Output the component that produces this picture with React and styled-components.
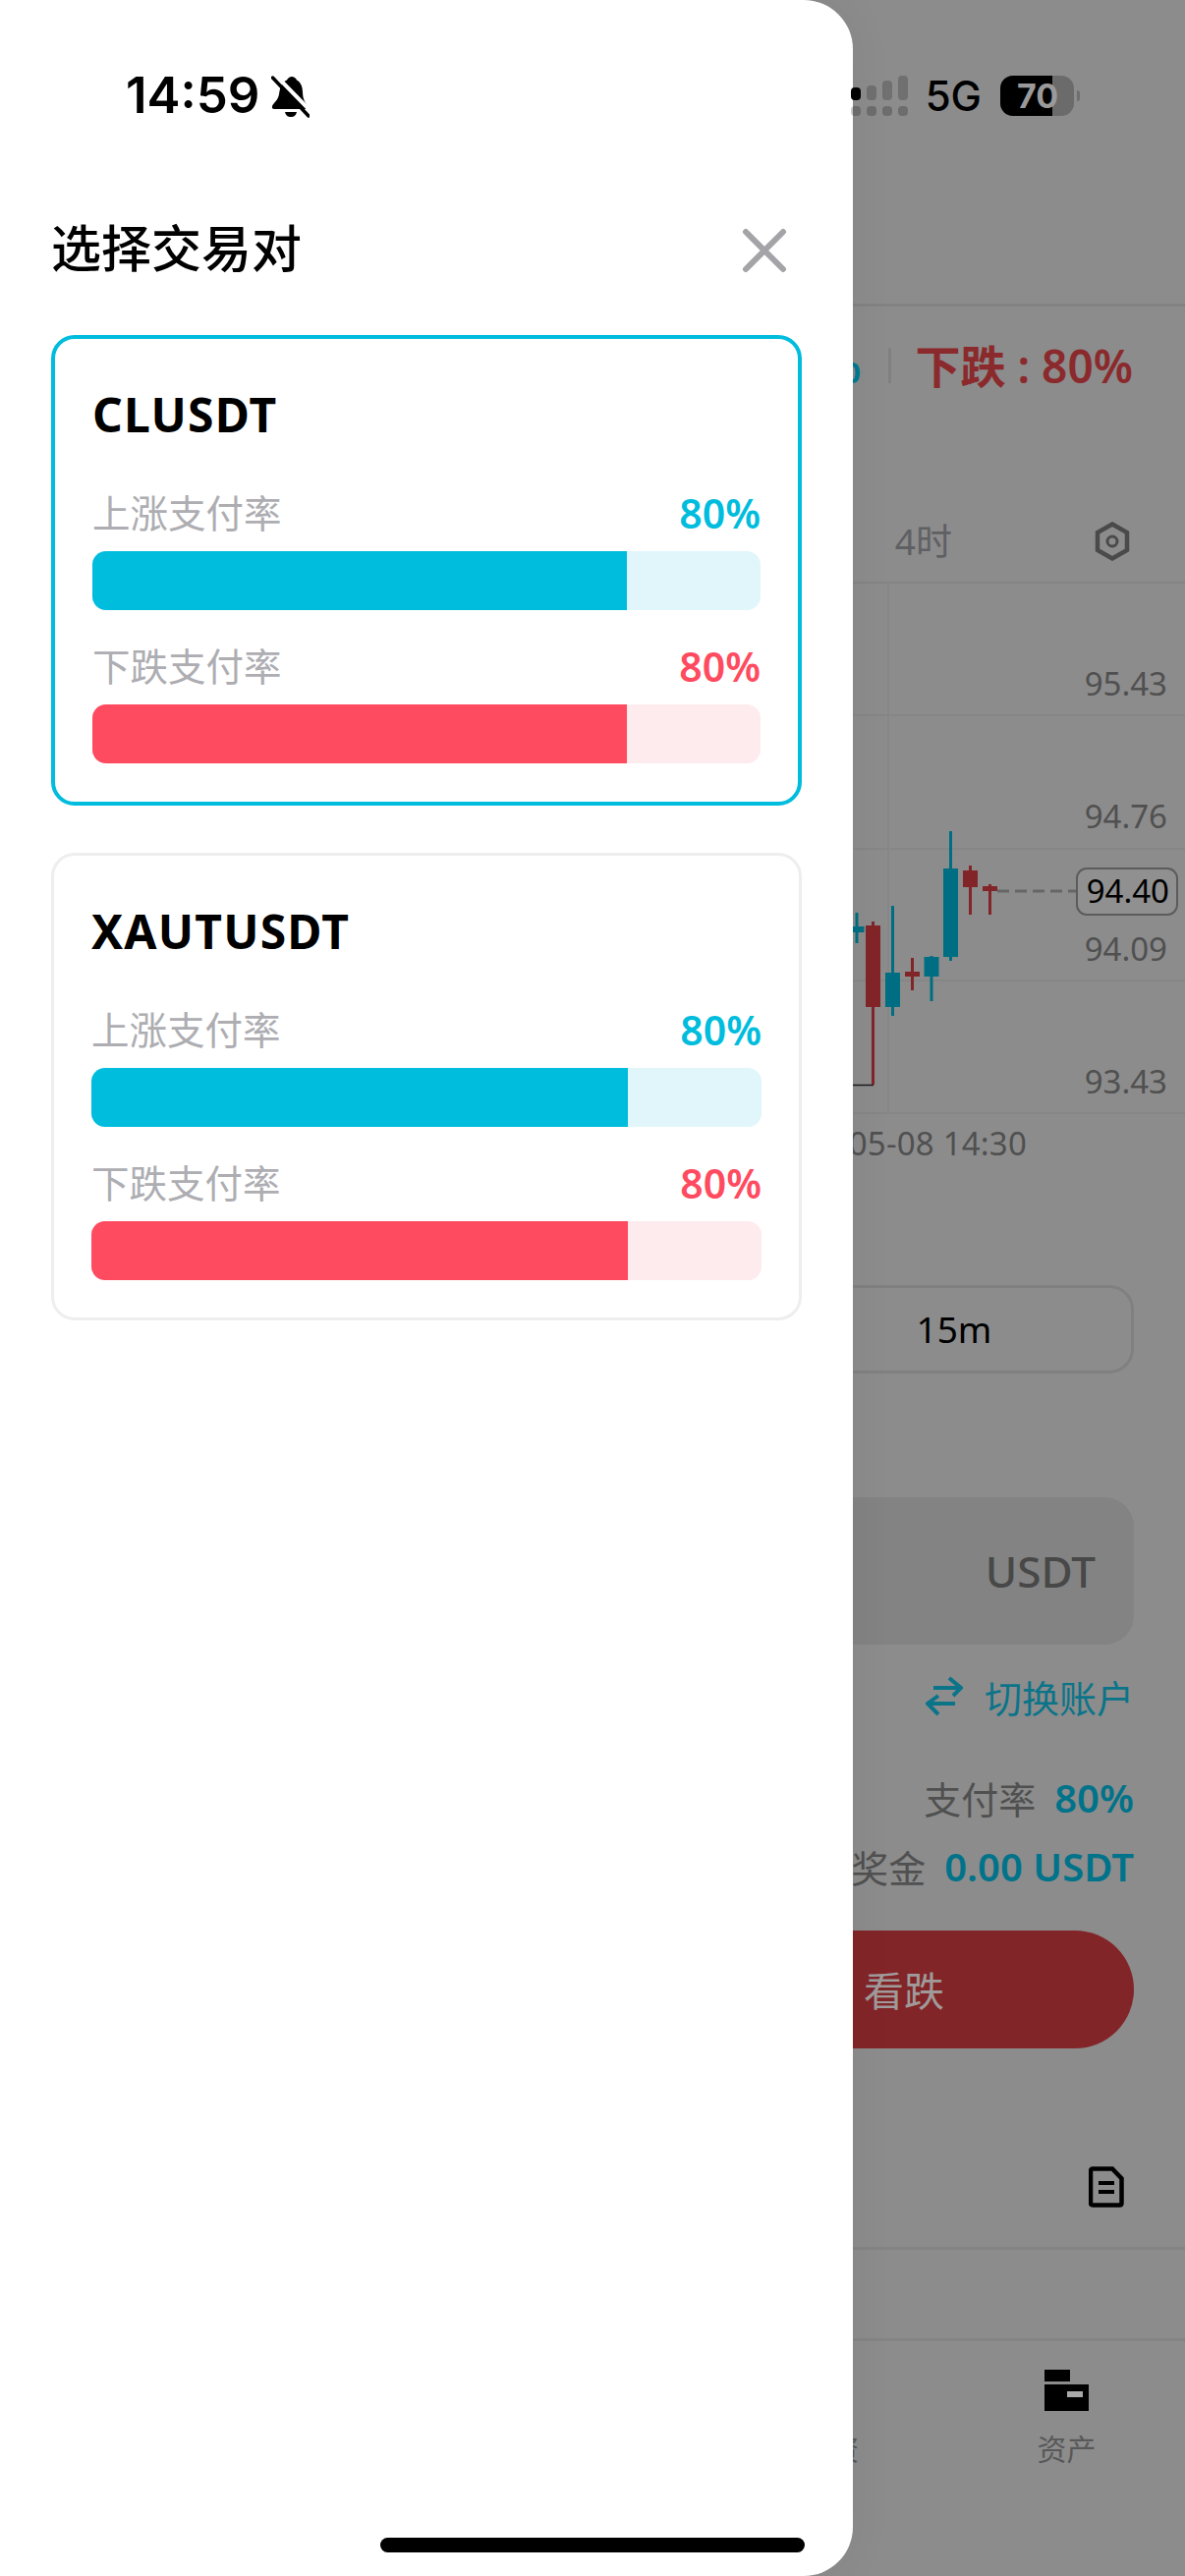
import styled, { createGlobalStyle } from "styled-components";

const GlobalStyle = createGlobalStyle`
  html, body {
    margin: 0;
    padding: 0;
    background: #8c8c8c;
  }
  * {
    box-sizing: border-box;
  }
`;

const latin = `"Noto Sans", "Noto Sans CJK SC", sans-serif`;
const cjk = `"Noto Sans CJK SC", "Noto Sans", sans-serif`;

const pairs = [
  { id: 1, name: "CLUSDT", up: 80, down: 80, selected: true },
  { id: 2, name: "XAUTUSDT", up: 80, down: 80, selected: false },
];

const candles = [
  { x: 872, top: 929, bottom: 960, open: 943, close: 949, up: true },
  { x: 888.5, top: 938, bottom: 1104, open: 942, close: 1025, up: false },
  { x: 908.5, top: 922, bottom: 1034, open: 990, close: 1025, up: true },
  { x: 928.5, top: 975, bottom: 1008, open: 989, close: 994, up: false },
  { x: 948, top: 973, bottom: 1019, open: 974, close: 994, up: true },
  { x: 967.5, top: 846, bottom: 978, open: 884, close: 974, up: true },
  { x: 987.5, top: 881, bottom: 931, open: 886, close: 903, up: false },
  { x: 1007.5, top: 900, bottom: 931, open: 902, close: 907, up: false },
];

const axisPrices = [
  { label: "95.43", y: 708 },
  { label: "94.76", y: 843 },
  { label: "94.09", y: 978 },
  { label: "93.43", y: 1113 },
];

function BellOffIcon() {
  return (
    <svg width="39" height="43" viewBox="0 0 39 43">
      <path
        d="M21 1c-2 0-4 1.5-5 3.5C10 7 9 13 8 19 7 25 3 27 1 31c-.5 2 .5 3 2 3h32c2 0 3-1 2-3-3-4-5-8-5-14 0-7-3-11-6-12.500C25 2.500 23 1 21 1Z"
        fill="#000"
      />
      <path d="M14 37h12c-1 4-3 5-6 5s-5-1-6-5Z" fill="#000" />
      <path d="M4 -1 44 40" stroke="#fff" strokeWidth="4" />
      <path d="M1.500 2 38 41" stroke="#000" strokeWidth="3.500" strokeLinecap="round" />
    </svg>
  );
}

function CloseIcon() {
  return (
    <svg width="46" height="46" viewBox="0 0 46 46">
      <path d="M4 4 42 42M42 4 4 42" stroke="#a3a3a8" strokeWidth="6" strokeLinecap="round" />
    </svg>
  );
}

function HexIcon() {
  return (
    <svg width="36" height="40" viewBox="0 0 36 40">
      <polygon
        points="18,2.500 33,11 33,29 18,37.500 3,29 3,11"
        fill="none"
        stroke="#4a4a4a"
        strokeWidth="4.500"
      />
      <circle cx="18" cy="20" r="5" fill="none" stroke="#4a4a4a" strokeWidth="3" />
    </svg>
  );
}

function SwapIcon() {
  return (
    <svg width="38" height="42" viewBox="0 0 38 42">
      <g fill="none" stroke="#0b7489" strokeWidth="4">
        <path d="M8 13H35" />
        <path d="M24 3 36 13 28 21" />
        <path d="M30 29H3" />
        <path d="M13 21 2 29 13 40" />
      </g>
    </svg>
  );
}

function DocIcon() {
  return (
    <svg width="36" height="42" viewBox="0 0 36 42">
      <path
        d="M4 2.500H24L33.500 12.500V37.500C33.500 38.800 32.800 39.500 31.500 39.500H4C2.800 39.500 2 38.800 2 37.500V4.500C2 3.200 2.800 2.500 4 2.500Z"
        fill="none"
        stroke="#000"
        strokeWidth="4.500"
      />
      <path d="M10 17H26M10 26H26" stroke="#000" strokeWidth="4" />
    </svg>
  );
}

function WalletIcon() {
  return (
    <svg width="45" height="42" viewBox="0 0 45 42">
      <rect x="0" y="0" width="26" height="12" fill="#000" />
      <rect x="0" y="15" width="45" height="27" fill="#000" />
      <rect x="23" y="22" width="16" height="6" fill="#a9a9a9" />
    </svg>
  );
}

function KlineChart() {
  return (
    <ChartSvg width="1206" height="596" viewBox="0 594 1206 596">
      <g stroke="#868686" strokeWidth="2">
        <path d="M0 728H1206M0 864H1206M0 998H1206M0 1133H1206" />
        <path d="M904 594V1133" />
      </g>
      <path d="M860 1104.500H889" stroke="#1c1c1c" strokeWidth="1.500" />
      {candles.map((c) => (
        <g key={c.x} fill={c.up ? "#006e82" : "#822528"}>
          <rect x={c.x - 1.5} y={c.top} width="3" height={c.bottom - c.top} />
          <rect x={c.x - 7.5} y={c.open} width="15" height={c.close - c.open} />
        </g>
      ))}
      <path d="M1015 907H1095" stroke="#666" strokeWidth="3" strokeDasharray="12 6" />
      {axisPrices.map((p) => (
        <AxisText key={p.label} x="1188" y={p.y} textAnchor="end">
          {p.label}
        </AxisText>
      ))}
      <rect x="1096" y="884" width="102" height="47" rx="10" fill="#909090" stroke="#5c5c5c" strokeWidth="2" />
      <AxisText x="1190" y="919" textAnchor="end" fill="#000">
        94.40
      </AxisText>
      <AxisText x="1045" y="1176" textAnchor="end" letterSpacing="0.2">
        05-08 14:30
      </AxisText>
    </ChartSvg>
  );
}

function RateBar({ label, value, color, track }) {
  return (
    <RateBlock>
      <RateHead>
        <RateLabel>{label}</RateLabel>
        <RateValue $color={color}>{value}%</RateValue>
      </RateHead>
      <BarTrack $track={track}>
        <BarFill $color={color} style={{ width: `${value}%` }} />
      </BarTrack>
    </RateBlock>
  );
}

function PairCard({ name, up, down, selected }) {
  return (
    <Card $selected={selected}>
      <CardTitle>{name}</CardTitle>
      <RateBar label="上涨支付率" value={up} color="#00bcdd" track="#e0f6fb" />
      <RateBar label="下跌支付率" value={down} color="#ff4b5f" track="#feebed" />
    </Card>
  );
}

export default function App() {
  return (
    <>
      <GlobalStyle />
      <Screen>
        <Backdrop>
          <TopBar />
          <RatesRow>
            <UpRate>上涨 : 80%</UpRate>
            <RateDivider />
            <DownRate>下跌 : 80%</DownRate>
          </RatesRow>
          <ChartTabs>
            <ChartTab>4时</ChartTab>
            <HexIcon />
          </ChartTabs>
          <KlineChart />
          <Duration>15m</Duration>
          <AmountField>USDT</AmountField>
          <SwitchAccount>
            <SwapIcon />
            <span>切换账户</span>
          </SwitchAccount>
          <InfoRow>
            <InfoLabel>支付率</InfoLabel>
            <InfoValue>80%</InfoValue>
          </InfoRow>
          <BonusRow>
            <InfoLabel>预计奖金</InfoLabel>
            <InfoValue>0.00 USDT</InfoValue>
          </BonusRow>
          <FallButton>看跌</FallButton>
          <OrdersHead>
            <DocIcon />
          </OrdersHead>
          <EmptyRow />
          <TabBar>
            <TabItem />
            <TabItem />
            <TabItem />
            <TabItem>
              <TabLabel>投资</TabLabel>
            </TabItem>
            <TabItem>
              <WalletIcon />
              <TabLabel>资产</TabLabel>
            </TabItem>
          </TabBar>
        </Backdrop>

        <Drawer>
          <DrawerHead>
            <DrawerTitle>选择交易对</DrawerTitle>
            <CloseSlot>
              <CloseIcon />
            </CloseSlot>
          </DrawerHead>
          <CardList>
            {pairs.map(({ id, ...pair }) => (
              <PairCard key={id} {...pair} />
            ))}
          </CardList>
        </Drawer>

        <StatusBar>
          <TimeGroup>
            <Clock>14:59</Clock>
            <BellOffIcon />
          </TimeGroup>
          <StatusRight>
            <SignalGrid>
              <SignalBar $h={13} $on />
              <SignalBar $h={15} />
              <SignalBar $h={20} />
              <SignalBar $h={25} />
              <SignalDot />
              <SignalDot />
              <SignalDot />
              <SignalDot />
            </SignalGrid>
            <Network>5G</Network>
            <Battery>
              <BatteryCharge style={{ width: "70%" }} />
              <BatteryText>70</BatteryText>
            </Battery>
            <BatteryNub />
          </StatusRight>
        </StatusBar>

        <HomeIndicator />
      </Screen>
    </>
  );
}

const Screen = styled.div`
  position: relative;
  width: 1206px;
  height: 2622px;
  overflow: hidden;
  background: #8c8c8c;
`;

const Backdrop = styled.div`
  display: flex;
  flex-direction: column;
  height: 100%;
  font-family: ${latin};
`;

const TopBar = styled.div`
  height: 312px;
  border-bottom: 3px solid #828282;
`;

const RatesRow = styled.div`
  display: flex;
  justify-content: flex-end;
  align-items: center;
  height: 125px;
  padding: 0 53px 5px 0;
  font-size: 46px;
  line-height: 60px;
  font-weight: 600;
  font-family: ${latin};
`;

const UpRate = styled.div`
  color: #007a92;
`;

const RateDivider = styled.div`
  width: 3px;
  height: 36px;
  margin: 0 25px 0 27px;
  background: #808080;
`;

const DownRate = styled.div`
  color: #8b2a2c;
`;

const ChartTabs = styled.div`
  display: flex;
  justify-content: flex-end;
  align-items: center;
  gap: 145px;
  height: 157px;
  padding: 72px 56px 0 0;
  border-bottom: 2px solid #848484;
`;

const ChartTab = styled.div`
  font-family: ${latin};
  font-size: 37px;
  line-height: 84px;
  color: #5f6063;
`;

const ChartSvg = styled.svg`
  display: block;
  flex: none;
`;

const AxisText = styled.text`
  font-family: ${latin};
  font-size: 33px;
  fill: ${(p) => p.fill || "#505050"};
`;

const Duration = styled.div`
  align-self: flex-end;
  width: 366px;
  height: 90px;
  margin: 118px 52px 0 0;
  border: 3px solid #808080;
  border-radius: 25px;
  text-align: center;
  font-size: 37px;
  line-height: 84px;
  color: #000;
`;

const AmountField = styled.div`
  align-self: flex-end;
  width: 500px;
  height: 150px;
  margin: 126px 52px 0 0;
  padding-right: 39px;
  border-radius: 30px;
  background: #838383;
  text-align: right;
  font-size: 44px;
  font-weight: 500;
  line-height: 150px;
  color: #484848;
`;

const SwitchAccount = styled.div`
  align-self: flex-end;
  display: flex;
  align-items: center;
  gap: 22px;
  height: 50px;
  margin: 27px 52px 0 0;
  font-family: ${cjk};
  font-size: 38px;
  color: #0b7489;
`;

const InfoRow = styled.div`
  align-self: flex-end;
  display: flex;
  align-items: center;
  gap: 19px;
  height: 50px;
  margin: 53px 52px 0 0;
`;

const BonusRow = styled(InfoRow)`
  margin-top: 20px;
`;

const InfoLabel = styled.span`
  font-family: ${cjk};
  font-size: 38px;
  color: #505050;
`;

const InfoValue = styled.span`
  font-family: ${latin};
  font-size: 40px;
  font-weight: 600;
  color: #00738a;
`;

const FallButton = styled.div`
  align-self: flex-end;
  width: 480px;
  height: 120px;
  margin: 41px 52px 0 0;
  padding-left: 205px;
  border-radius: 60px;
  background: #822528;
  font-family: ${cjk};
  font-size: 41px;
  line-height: 118px;
  color: #a09a9a;
`;

const OrdersHead = styled.div`
  display: flex;
  justify-content: flex-end;
  height: 205px;
  padding: 120px 62px 0 0;
  border-bottom: 3px solid #848484;
`;

const EmptyRow = styled.div`
  height: 93px;
  border-bottom: 3px solid #848484;
`;

const TabBar = styled.div`
  display: grid;
  grid-template-columns: repeat(5, 1fr);
  padding-top: 29px;
`;

const TabItem = styled.div`
  display: flex;
  flex-direction: column;
  justify-content: flex-end;
  align-items: center;
  gap: 17px;
  height: 99px;
`;

const TabLabel = styled.div`
  font-family: ${cjk};
  font-size: 30px;
  line-height: 40px;
  color: #585858;
`;

const Drawer = styled.div`
  position: absolute;
  top: 0;
  bottom: 0;
  left: 0;
  width: 868px;
  padding: 228px 52px 0;
  border-radius: 0 50px 50px 0;
  background: #fff;
  box-shadow: 0 0 48px rgba(0, 0, 0, 0.05);
`;

const DrawerHead = styled.div`
  display: flex;
  justify-content: space-between;
  align-items: center;
  height: 50px;
`;

const DrawerTitle = styled.h2`
  margin: 0 0 7px;
  font-family: ${cjk};
  font-size: 51px;
  font-weight: 500;
  line-height: 50px;
  color: #000;
`;

const CloseSlot = styled.div`
  display: flex;
  margin: 3px 15px 0 0;
`;

const CardList = styled.div`
  display: flex;
  flex-direction: column;
  gap: 48px;
  margin-top: 63px;
`;

const Card = styled.div`
  padding: ${(p) => (p.$selected ? "38px 38px 39px" : "38px")};
  border: ${(p) => (p.$selected ? "4px solid #00bcdd" : "3px solid #eeeeee")};
  border-radius: 24px;
  background: #fff;
`;

const CardTitle = styled.div`
  height: 80px;
  margin-bottom: 34px;
  font-family: ${latin};
  font-size: 48px;
  font-weight: 700;
  line-height: 78px;
  letter-spacing: 1.200px;
  color: #000;
`;

const RateBlock = styled.div`
  & + & {
    margin-top: 32px;
  }
`;

const RateHead = styled.div`
  display: flex;
  justify-content: space-between;
  align-items: center;
  height: 52px;
  margin-bottom: 12px;
`;

const RateLabel = styled.span`
  margin-bottom: 6px;
  font-family: ${cjk};
  font-size: 38.500px;
  font-weight: 400;
  color: #adadb2;
`;

const RateValue = styled.span`
  margin-bottom: 3px;
  font-family: ${latin};
  font-size: 41px;
  font-weight: 600;
  color: ${(p) => p.$color};
`;

const BarTrack = styled.div`
  height: 60px;
  overflow: hidden;
  border-radius: 14px;
  background: ${(p) => p.$track};
`;

const BarFill = styled.div`
  height: 100%;
  background: ${(p) => p.$color};
`;

const StatusBar = styled.div`
  position: absolute;
  top: 0;
  left: 0;
  right: 0;
  display: flex;
  justify-content: space-between;
  height: 130px;
  padding: 77px 107px 0 128px;
`;

const TimeGroup = styled.div`
  display: flex;
  align-items: flex-start;
  gap: 11px;
`;

const Clock = styled.div`
  font-family: Inter, sans-serif;
  font-size: 51px;
  font-weight: 600;
  line-height: 40px;
  color: #000;
`;

const StatusRight = styled.div`
  display: flex;
  align-items: flex-start;
`;

const SignalGrid = styled.div`
  display: grid;
  grid-template-columns: repeat(4, 10px);
  grid-template-rows: 25px 10px;
  column-gap: 6px;
  row-gap: 6px;
  margin-right: 18px;
`;

const SignalBar = styled.div`
  align-self: end;
  height: ${(p) => p.$h}px;
  border-radius: 4px;
  background: ${(p) => (p.$on ? "#000" : "rgba(0, 0, 0, 0.2)")};
`;

const SignalDot = styled.div`
  border-radius: 4px;
  background: rgba(0, 0, 0, 0.22);
`;

const Network = styled.div`
  margin-right: 19px;
  font-family: Inter, sans-serif;
  font-size: 42px;
  font-weight: 500;
  line-height: 42px;
  color: #000;
`;

const Battery = styled.div`
  position: relative;
  width: 75px;
  height: 41px;
  overflow: hidden;
  border-radius: 13px;
  background: #6b6b6b;
`;

const BatteryCharge = styled.div`
  height: 100%;
  background: #000;
`;

const BatteryText = styled.div`
  position: absolute;
  top: 0;
  left: 17px;
  font-family: Inter, sans-serif;
  font-size: 34px;
  font-weight: 700;
  line-height: 41px;
  color: #9a9a9a;
`;

const BatteryNub = styled.div`
  align-self: flex-start;
  width: 3px;
  height: 11px;
  margin: 15px 0 0 3px;
  border-radius: 0 3px 3px 0;
  background: #6e6e6e;
`;

const HomeIndicator = styled.div`
  position: absolute;
  left: 387px;
  bottom: 24px;
  width: 432px;
  height: 15px;
  border-radius: 8px;
  background: #000;
`;
